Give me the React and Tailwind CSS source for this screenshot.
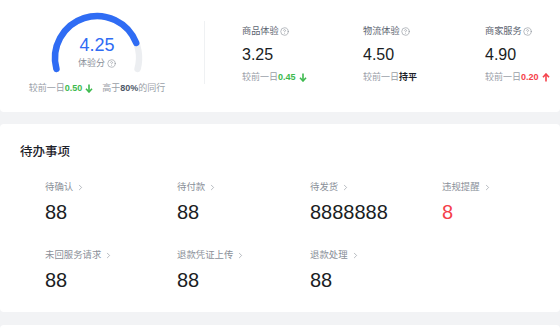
import React from "react";
import { CircleHelp, ChevronRight } from "lucide-react";

const FONT = { fontFamily: '"Liberation Sans", "Noto Sans CJK SC", sans-serif' };

function Down({ color }) {
  return (
    <svg width="8" height="9" viewBox="0 0 8 9" className="inline-block ml-[3px]">
      <path d="M4 0.5 V7.5" stroke={color} strokeWidth="1.6" />
      <path d="M1 4.8 L4 8 L7 4.8" stroke={color} strokeWidth="1.6" fill="none" />
    </svg>
  );
}

function Up({ color }) {
  return (
    <svg width="8" height="9" viewBox="0 0 8 9" className="inline-block ml-[3px]">
      <path d="M4 8.5 V1.5" stroke={color} strokeWidth="1.6" />
      <path d="M1 4.2 L4 1 L7 4.2" stroke={color} strokeWidth="1.6" fill="none" />
    </svg>
  );
}

function Metric({ title, value, delta }) {
  return (
    <div className="flex flex-col">
      <div className="flex items-center h-[12px] text-[9.2px] text-[#5c6470] leading-[12px]">
        {title}
        <CircleHelp size={9} strokeWidth={1.6} className="ml-[1px] text-[#8a9099]" />
      </div>
      <div className="mt-[8px] h-[20px] leading-[20px] text-[16px] text-[#1a1d23]">{value}</div>
      <div className="mt-[6px] h-[12px] leading-[12px] text-[9px] text-[#9aa0a8] flex items-center">
        较前一日{delta}
      </div>
    </div>
  );
}

function Todo({ label, value, red }) {
  return (
    <div className="flex flex-col">
      <div className="flex items-center h-[12px] leading-[12px] text-[9.4px] text-[#8a9099]">
        {label}
        <ChevronRight size={9} strokeWidth={1.6} className="ml-[3px] text-[#8a9099]" />
      </div>
      <div className={`mt-[7px] h-[24px] leading-[24px] text-[20px] ${red ? "text-[#f5414a]" : "text-[#1a1d23]"}`}>
        {value}
      </div>
    </div>
  );
}

export default function App() {
  return (
    <div className="w-[560px] h-[334px] bg-[#f2f3f5] overflow-hidden flex flex-col" style={FONT}>
      {/* card 1 */}
      <div className="h-[112px] bg-white rounded-b-[4px] flex items-start shrink-0">
        <div className="w-[194px] flex flex-col items-center pt-[8px]">
          <div className="relative w-[100px] h-[66px]">
            <svg width="100" height="66" viewBox="0 0 100 66">
              <path d="M 9.43 60.87 A 42 42 0 1 1 90.57 60.87" fill="none" stroke="#eceef1" strokeWidth="6.5" strokeLinecap="round" />
              <path d="M 9.43 60.87 A 42 42 0 0 1 89.21 34.95" fill="none" stroke="#2f6cf4" strokeWidth="6.5" strokeLinecap="round" />
            </svg>
            <div className="absolute left-0 right-0 top-[26px] text-center text-[18px] leading-[22px] text-[#2f6cf4]">4.25</div>
            <div className="absolute left-0 right-0 top-[49px] flex items-center justify-center text-[9px] leading-[12px] text-[#8a9099]">
              体验分
              <CircleHelp size={9} strokeWidth={1.6} className="ml-[2px] text-[#8a9099]" />
            </div>
          </div>
          <div className="mt-[8px] h-[12px] leading-[12px] text-[9px] text-[#9aa0a8] flex items-center">
            较前一日<span className="text-[#3dba4e] font-bold">0.50</span>
            <Down color="#3dba4e" />
            <span className="ml-[9px]">高于<span className="text-[#4e5969] font-bold">80%</span>的同行</span>
          </div>
        </div>
        <div className="ml-[10px] mt-[21px] w-px h-[63px] bg-[#eff1f3]" />
        <div className="ml-[37px] flex-1 grid grid-cols-[121px_122px_1fr] pt-[25px]">
          <Metric
            title="商品体验"
            value="3.25"
            delta={<><span className="text-[#3dba4e] font-bold">0.45</span><Down color="#3dba4e" /></>}
          />
          <Metric
            title="物流体验"
            value="4.50"
            delta={<span className="text-[#1d2129] font-bold">持平</span>}
          />
          <Metric
            title="商家服务"
            value="4.90"
            delta={<><span className="text-[#f5414a] font-bold">0.20</span><Up color="#f5414a" /></>}
          />
        </div>
      </div>

      {/* card 2 */}
      <div className="mt-[12px] h-[188px] bg-white rounded-[4px] pt-[20px] px-[20px] shrink-0">
        <div className="h-[16px] leading-[16px] text-[12.5px] text-[#1d2129] font-medium">待办事项</div>
        <div className="mt-[21px] pl-[25px] grid grid-cols-[132px_133px_132px_1fr] gap-y-[25px]">
          <Todo label="待确认" value="88" />
          <Todo label="待付款" value="88" />
          <Todo label="待发货" value="8888888" />
          <Todo label="违规提醒" value="8" red />
          <Todo label="未回服务请求" value="88" />
          <Todo label="退款凭证上传" value="88" />
          <Todo label="退款处理" value="88" />
        </div>
      </div>

      {/* card 3 */}
      <div className="mt-[13px] flex-1 bg-white rounded-t-[4px]" />
    </div>
  );
}
